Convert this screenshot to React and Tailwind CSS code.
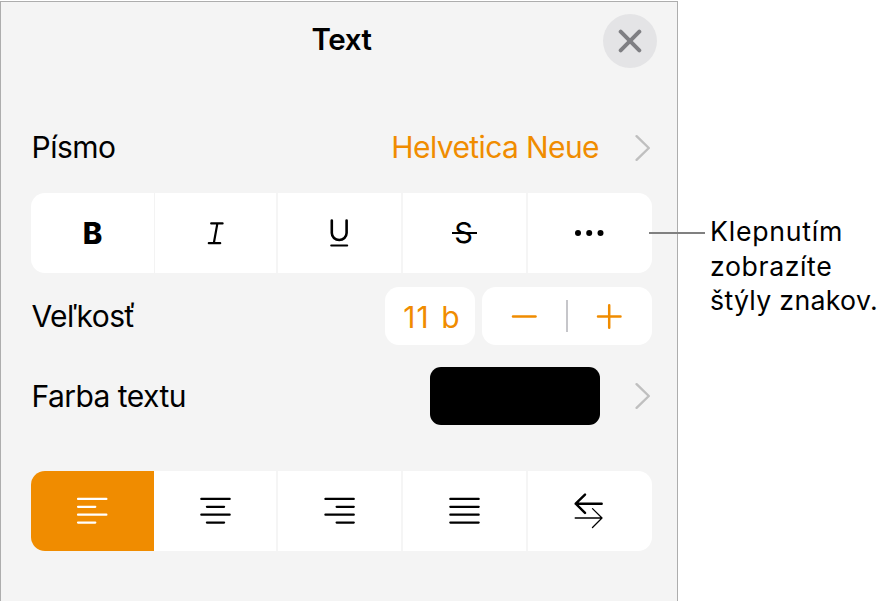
function Icon({ children, strokeWidth = 2 }) {
  return (
    <svg
      viewBox="0 0 36 36"
      className="h-9 w-9"
      fill="none"
      stroke="currentColor"
      strokeWidth={strokeWidth}
      strokeLinecap="round"
      strokeLinejoin="round"
      aria-hidden="true"
    >
      {children}
    </svg>
  );
}

function Chevron() {
  return (
    <svg viewBox="0 0 16 28" className="mr-px h-7 w-4 text-[#bfbfbf]" fill="none" stroke="currentColor" strokeWidth="2.4" strokeLinecap="round" strokeLinejoin="round" aria-hidden="true">
      <path d="M1.6 2.2 13.8 14 1.6 25.8" />
    </svg>
  );
}

function Segments({ items, label }) {
  return (
    <div role="group" aria-label={label} className="grid h-20 w-[621px] grid-cols-[124px_123px_125px_125px_124px] overflow-hidden rounded-[14px] bg-white">
      {items.map(({ name, icon, cell }) => (
        <button key={name} type="button" aria-label={name} className={`flex items-center justify-center ${cell}`}>
          {icon}
        </button>
      ))}
    </div>
  );
}

const styleItems = [
  {
    name: "Tučné",
    cell: "border-r border-[#f3f3f3]",
    icon: <span className="text-[29.5px] leading-9 font-extrabold">B</span>,
  },
  {
    name: "Kurzíva",
    cell: "border-r-2 border-[#f5f5f5]",
    icon: (
      <Icon>
        <path d="M13.2 8.4h11.4M10.8 28.2h11.4M19.4 8.4l-3.6 19.8" strokeWidth="2.2" />
      </Icon>
    ),
  },
  {
    name: "Podčiarknuté",
    cell: "border-r-2 border-[#f5f5f5]",
    icon: (
      <Icon strokeWidth={2.6}>
        <path d="M9.8 5.5v12.6a7.4 6.9 0 0 0 14.8 0V5.5" />
        <path d="M9.2 30.4h16" strokeWidth="2" />
      </Icon>
    ),
  },
  {
    name: "Prečiarknuté",
    cell: "border-r-2 border-[#f5f5f5]",
    icon: (
      <span className="relative flex h-9 w-9 items-center justify-center">
        <span className="mr-[2px] text-[29px] leading-9">S</span>
        <span className="absolute top-[17px] left-[5px] h-[1.5px] w-[25px] bg-black" />
      </span>
    ),
  },
  {
    name: "Viac",
    cell: "",
    icon: (
      <Icon>
        <g fill="currentColor" stroke="none">
          <circle cx="6" cy="18" r="3" />
          <circle cx="17.2" cy="18" r="3" />
          <circle cx="28.5" cy="18" r="3" />
        </g>
      </Icon>
    ),
  },
];

const alignItems = [
  {
    name: "Zarovnať doľava",
    cell: "border-r border-white bg-[#f08c00] text-white",
    icon: (
      <Icon>
        <path d="M3 5.9h28.4M3 13.8h17.3M3 21.7h28.4M3 29.6h17.3" strokeWidth="2.2" />
      </Icon>
    ),
  },
  {
    name: "Centrovať",
    cell: "border-r-2 border-[#f5f5f5]",
    icon: (
      <Icon>
        <path d="M3.3 5.9h28.4M8.9 13.8h17.2M3.3 21.7h28.4M8.9 29.6h17.2" strokeWidth="2.2" />
      </Icon>
    ),
  },
  {
    name: "Zarovnať doprava",
    cell: "border-r-2 border-[#f5f5f5]",
    icon: (
      <Icon>
        <path d="M3.4 5.9h28.4M14.6 13.8h17.2M3.4 21.7h28.4M14.6 29.6h17.2" strokeWidth="2.2" />
      </Icon>
    ),
  },
  {
    name: "Zarovnať do bloku",
    cell: "border-r-2 border-[#f5f5f5]",
    icon: (
      <Icon>
        <path d="M3.3 5.9h28.4M3.3 13.8h28.4M3.3 21.7h28.4M3.3 29.6h28.4" strokeWidth="2.2" />
      </Icon>
    ),
  },
  {
    name: "Smer textu",
    cell: "",
    icon: (
      <Icon>
        <path d="M29.7 10.7H3.7M13 1.6 3.7 10.7l9.3 9.2" strokeWidth="2.4" />
        <path d="M3.2 25h26.8M20.5 15.6 30 25l-9.5 9.5" strokeWidth="1.3" />
      </Icon>
    ),
  },
];

export default function App() {
  return (
    <main className="relative flex h-[601px] w-[883px] overflow-hidden bg-white pt-px font-['Inter',sans-serif] text-black">
      <section className="flex h-[600px] w-[678px] flex-col border-t border-r border-l border-[#adadad] bg-[#f4f4f4] pr-[25px] pl-[30px] text-[30px] leading-9">
        <header className="grid h-[76px] w-[626px] grid-cols-[54px_1fr_54px] items-center">
          <h1 className="col-start-2 -mt-[2px] -ml-[5px] text-center text-[29.5px] font-semibold tracking-[-0.4px]">Text</h1>
          <button type="button" aria-label="Zavrieť" className="mt-px flex h-[54px] w-[54px] items-center justify-center rounded-full bg-[#e4e4e6] text-[#7f7f83]">
            <svg viewBox="0 0 24 24" className="h-6 w-6" fill="none" stroke="currentColor" strokeWidth="4" strokeLinecap="round" aria-hidden="true">
              <path d="m2.7 2.7 18.6 18.6M21.3 2.7 2.7 21.3" />
            </svg>
          </button>
        </header>

        <div className="mt-10 flex h-[60px] items-center">
          <span className="-mt-[2px] ml-[0.5px] tracking-[-0.5px]">Písmo</span>
          <span className="-mt-[2px] mr-9 ml-auto text-[#f08c00] tracking-[-0.6px]">Helvetica Neue</span>
          <Chevron />
        </div>

        <div className="mt-[15px]">
          <Segments items={styleItems} label="Štýl" />
        </div>

        <div className="mt-[14px] flex h-[58px] items-center">
          <span className="ml-[0.5px] tracking-[-0.6px]">Veľkosť</span>
          <span className="mr-[7px] ml-auto flex h-[58px] w-[90px] items-center justify-center rounded-[14px] bg-white pt-px pl-1 text-[#f08c00] tracking-[1.1px] [word-spacing:2px]">11 b</span>
          <div className="flex h-[58px] w-[170px] items-center rounded-[14px] bg-white text-[#f08c00]">
            <button type="button" aria-label="Zmenšiť" className="flex flex-1 justify-center">
              <Icon strokeWidth={2.5}>
                <path d="M7 18.5h22.5" />
              </Icon>
            </button>
            <span className="h-8 w-[1.5px] bg-[#c6c6ca]" />
            <button type="button" aria-label="Zväčšiť" className="flex flex-1 justify-center">
              <Icon strokeWidth={2.5}>
                <path d="M6 18.5h22.5M17.2 7.3v22.5" />
              </Icon>
            </button>
          </div>
        </div>

        <div className="mt-[22px] flex h-[58px] items-center">
          <span className="ml-[0.5px] tracking-[-0.55px]">Farba textu</span>
          <span className="mr-[35px] ml-auto h-[58px] w-[170px] rounded-[11px] bg-black" />
          <Chevron />
        </div>

        <div className="mt-[46px]">
          <Segments items={alignItems} label="Zarovnanie" />
        </div>
      </section>

      <p className="mt-[213px] ml-8 flex flex-col text-[26.7px] leading-[34.7px] whitespace-nowrap">
        <span className="tracking-[0.75px]">Klepnutím</span>
        <span className="tracking-[0.6px]">zobrazíte</span>
        <span className="tracking-[0.3px]">štýly znakov.</span>
      </p>
      {/* leader from the "more" button to its caption */}
      <span className="absolute top-[232px] left-[649px] h-[2px] w-14 bg-[#808080]" />
    </main>
  );
}
